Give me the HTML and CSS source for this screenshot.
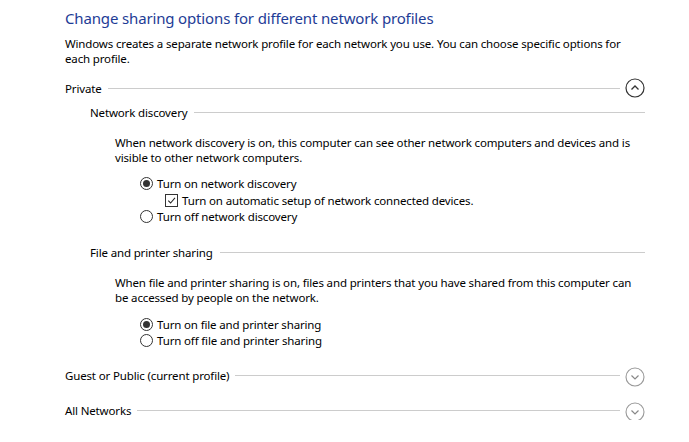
FILE: index.html
```html
<!DOCTYPE html>
<html>
<head>
<meta charset="utf-8">
<link rel="stylesheet" href="styles.css">
</head>
<body>
<div class="page">
  <h1 class="title">Change sharing options for different network profiles</h1>
  <p class="intro">Windows creates a separate network profile for each network you use. You can choose specific options for each profile.</p>

  <div class="profile-head first">
    <span class="label">Private</span>
    <span class="rule"></span>
    <span class="toggle dark">
      <svg viewBox="0 0 20 20" width="20" height="20"><circle cx="10" cy="10" r="9" fill="none" stroke="#333" stroke-width="1.2"/><path d="M6.5 11.5 L10 8 L13.5 11.5" fill="none" stroke="#333" stroke-width="1.3"/></svg>
    </span>
  </div>

  <div class="group">
    <div class="sub-head"><span class="label">Network discovery</span><span class="rule"></span></div>
    <p class="desc">When network discovery is on, this computer can see other network computers and devices and is visible to other network computers.</p>
    <div class="options">
      <div class="opt"><span class="radio on"></span>Turn on network discovery</div>
      <div class="opt sub"><span class="check"><svg viewBox="0 0 12 12" width="12" height="12"><path d="M2.5 6.2 L5 8.7 L9.8 3.2" fill="none" stroke="#222" stroke-width="1.1"/></svg></span>Turn on automatic setup of network connected devices.</div>
      <div class="opt"><span class="radio"></span>Turn off network discovery</div>
    </div>

    <div class="sub-head second"><span class="label">File and printer sharing</span><span class="rule"></span></div>
    <p class="desc">When file and printer sharing is on, files and printers that you have shared from this computer can be accessed by people on the network.</p>
    <div class="options second">
      <div class="opt"><span class="radio on"></span>Turn on file and printer sharing</div>
      <div class="opt"><span class="radio"></span>Turn off file and printer sharing</div>
    </div>
  </div>

  <div class="profile-head guest">
    <span class="label">Guest or Public (current profile)</span>
    <span class="rule"></span>
    <span class="toggle low">
      <svg viewBox="0 0 20 20" width="20" height="20"><circle cx="10" cy="10" r="9" fill="none" stroke="#999" stroke-width="1.1"/><path d="M6.5 8.5 L10 12 L13.5 8.5" fill="none" stroke="#888" stroke-width="1.2"/></svg>
    </span>
  </div>

  <div class="profile-head all">
    <span class="label">All Networks</span>
    <span class="rule"></span>
    <span class="toggle low">
      <svg viewBox="0 0 20 20" width="20" height="20"><circle cx="10" cy="10" r="9" fill="none" stroke="#999" stroke-width="1.1"/><path d="M6.5 8.5 L10 12 L13.5 8.5" fill="none" stroke="#888" stroke-width="1.2"/></svg>
    </span>
  </div>
</div>
</body>
</html>
```

FILE: styles.css
```css
html, body {
  margin: 0;
  padding: 0;
  background: #fff;
}
body {
  font-family: "Noto Sans", "Open Sans", sans-serif;
  font-size: 11.5px;
  letter-spacing: -0.15px;
  color: #000;
}
.page {
  padding: 8px 44px 0 65px;
}
.title {
  margin: 0;
  font-size: 15px;
  font-weight: 400;
  line-height: 20px;
  letter-spacing: -0.15px;
  color: #1e3c96;
}
.intro {
  margin: 8px 0 0;
  line-height: 15px;
}
.profile-head {
  display: flex;
  align-items: center;
  height: 20px;
}
.profile-head.first { margin-top: 12px; }
.profile-head.guest { margin-top: 16px; }
.profile-head.all { margin-top: 15px; }
.rule {
  flex: 1;
  height: 0;
  border-top: 1px solid #ccc;
  margin-left: 6px;
}
.sub-head .rule {
  margin-left: 7px;
}
.toggle {
  width: 20px;
  height: 20px;
  margin-left: 5px;
  display: flex;
}
.toggle.low {
  margin-top: 3px;
}
.group {
  padding-left: 25px;
}
.sub-head {
  display: flex;
  align-items: center;
  height: 15px;
  margin-top: 7px;
}
.sub-head.second { margin-top: 20px; }
.desc {
  margin: 15px 0 0 25px;
  line-height: 15px;
}
.options {
  margin: 10px 0 0 50px;
}
.options.second {
  margin-top: 11px;
}
.opt {
  display: flex;
  align-items: center;
  height: 16.5px;
}
.opt.sub {
  padding-left: 25px;
  height: 17px;
}
.radio {
  width: 11px;
  height: 11px;
  border: 1px solid #333;
  border-radius: 50%;
  margin-right: 4px;
  display: flex;
  align-items: center;
  justify-content: center;
  box-sizing: content-box;
}
.radio.on::after {
  content: "";
  width: 7px;
  height: 7px;
  border-radius: 50%;
  background: #333;
}
.check {
  width: 11px;
  height: 11px;
  border: 1px solid #333;
  margin-right: 4px;
  display: flex;
}
.check svg {
  width: 11px;
  height: 11px;
}
```
